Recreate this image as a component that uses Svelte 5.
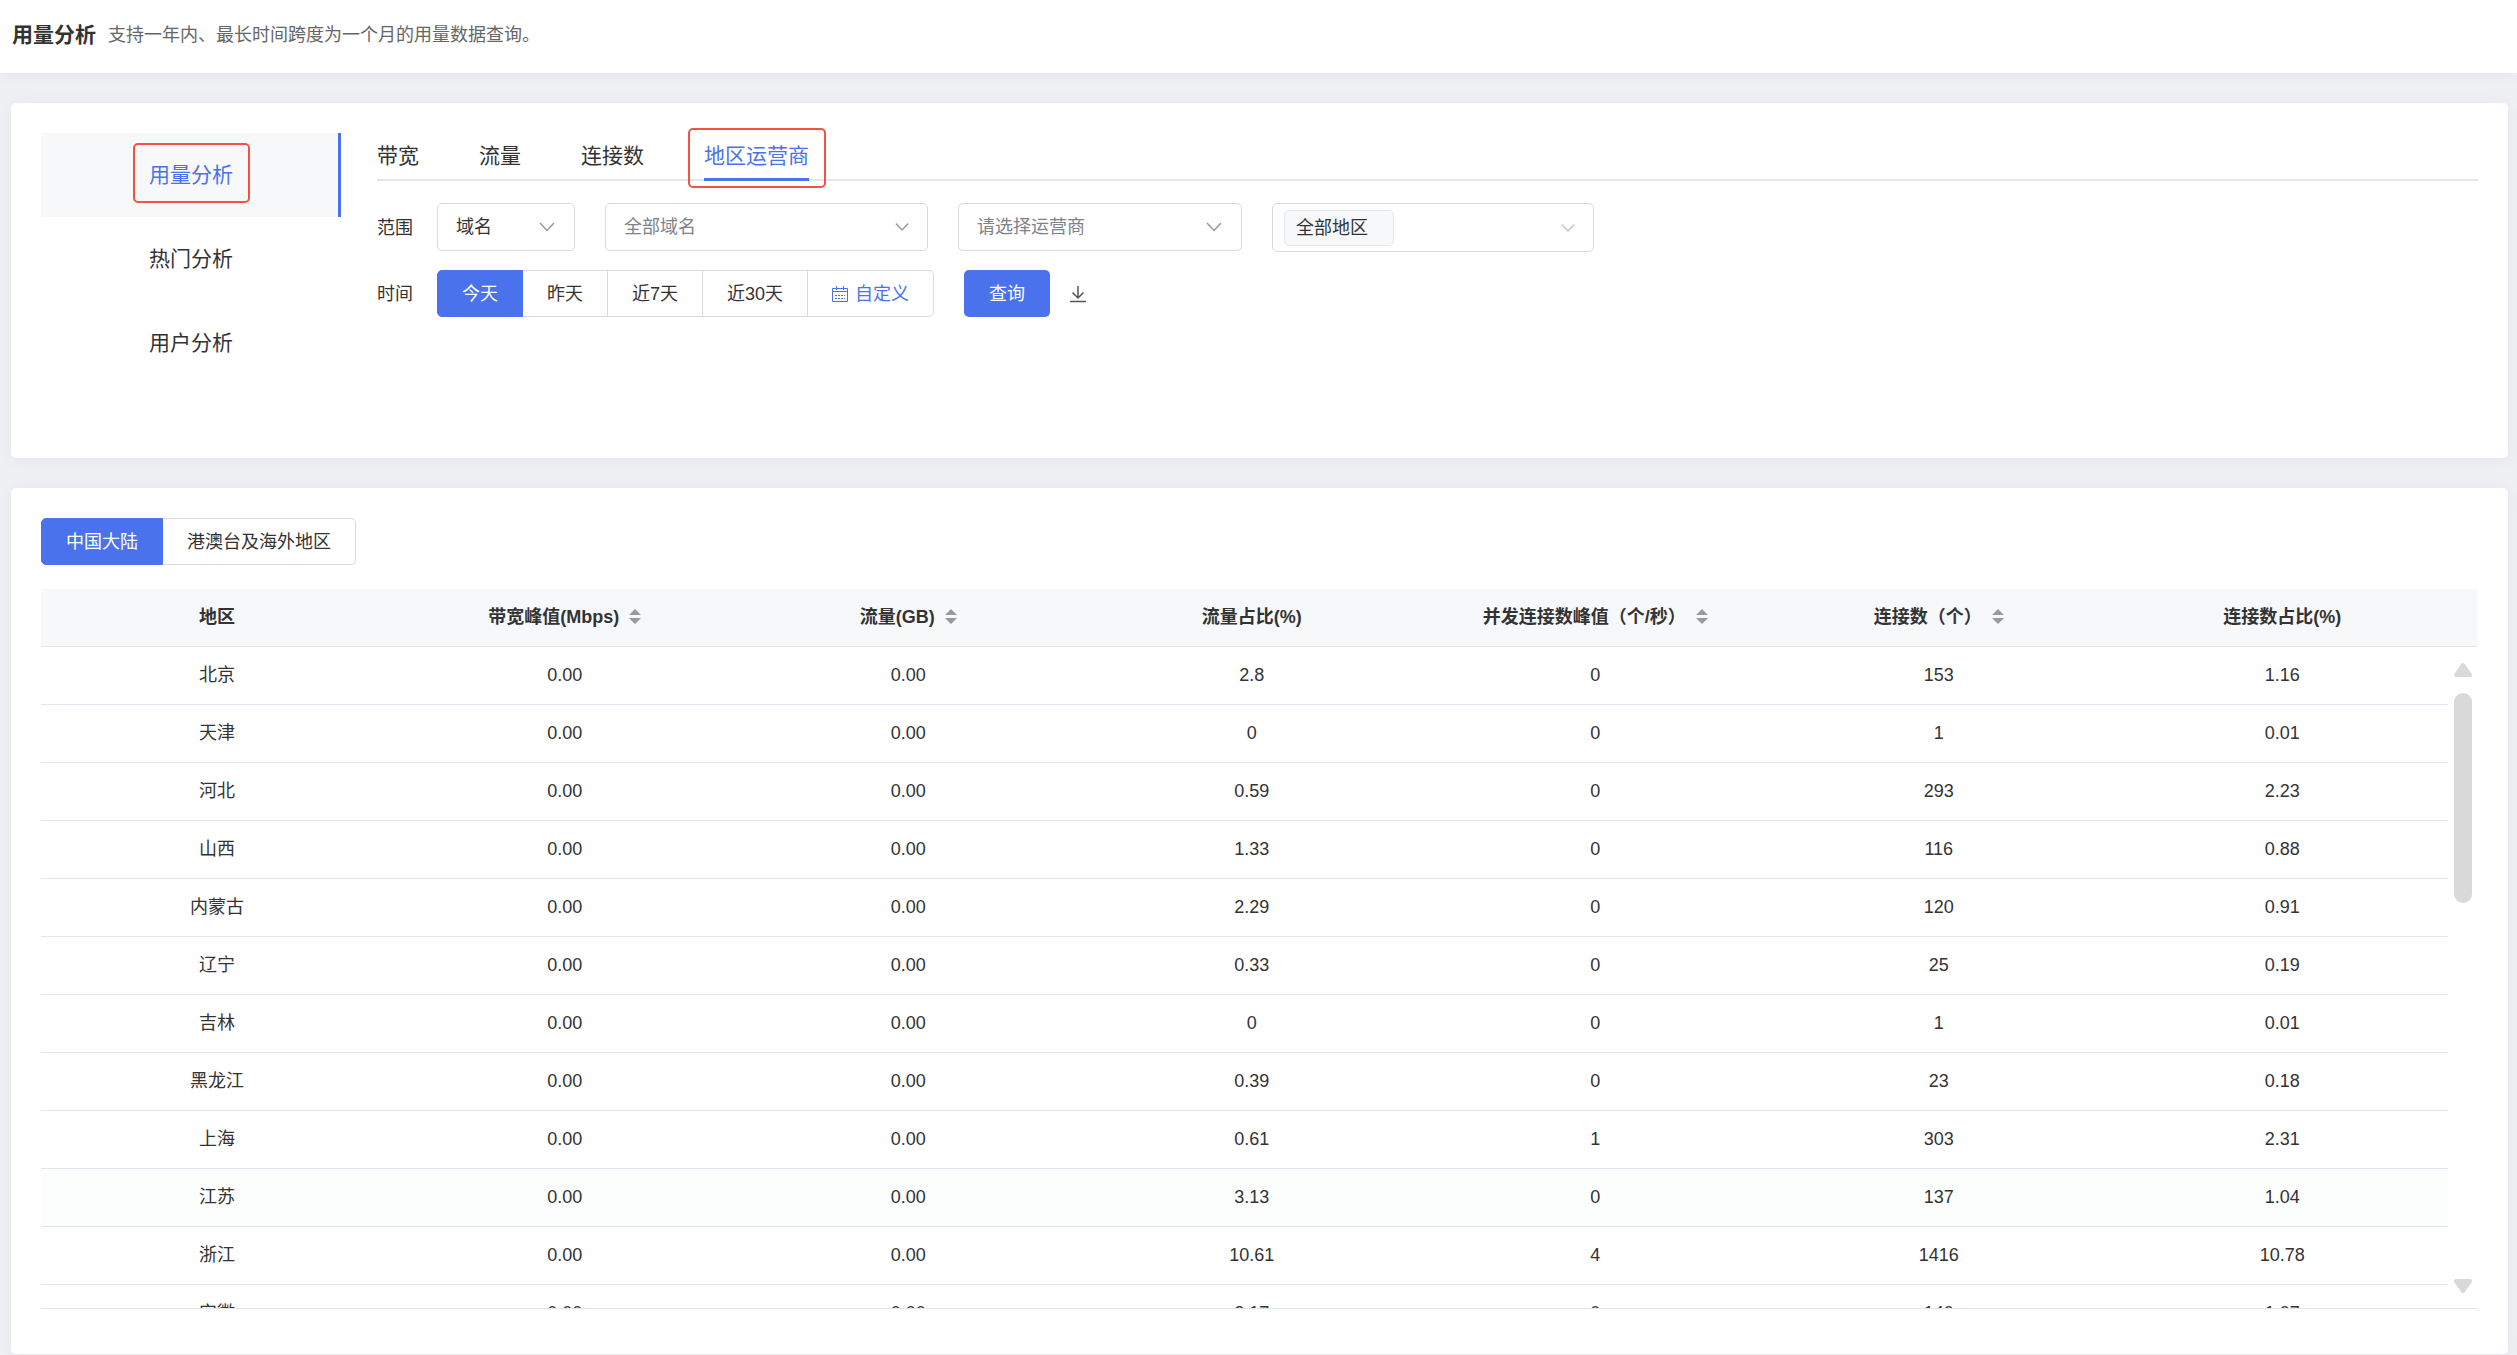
<script lang="ts">
  type Column = { key: string; label: string; sortable?: boolean };

  const menu = ['用量分析', '热门分析', '用户分析'];
  const tabs = ['带宽', '流量', '连接数', '地区运营商'];
  const ranges = ['今天', '昨天', '近7天', '近30天'];
  const areas = ['中国大陆', '港澳台及海外地区'];

  const columns: Column[] = [
    { key: 'area', label: '地区' },
    { key: 'bandwidth', label: '带宽峰值(Mbps)', sortable: true },
    { key: 'flow', label: '流量(GB)', sortable: true },
    { key: 'flowRate', label: '流量占比(%)' },
    { key: 'peak', label: '并发连接数峰值（个/秒）', sortable: true },
    { key: 'conn', label: '连接数（个）', sortable: true },
    { key: 'connRate', label: '连接数占比(%)' }
  ];

  const rows = [
    ['北京', '0.00', '0.00', '2.8', '0', '153', '1.16'],
    ['天津', '0.00', '0.00', '0', '0', '1', '0.01'],
    ['河北', '0.00', '0.00', '0.59', '0', '293', '2.23'],
    ['山西', '0.00', '0.00', '1.33', '0', '116', '0.88'],
    ['内蒙古', '0.00', '0.00', '2.29', '0', '120', '0.91'],
    ['辽宁', '0.00', '0.00', '0.33', '0', '25', '0.19'],
    ['吉林', '0.00', '0.00', '0', '0', '1', '0.01'],
    ['黑龙江', '0.00', '0.00', '0.39', '0', '23', '0.18'],
    ['上海', '0.00', '0.00', '0.61', '1', '303', '2.31'],
    ['江苏', '0.00', '0.00', '3.13', '0', '137', '1.04'],
    ['浙江', '0.00', '0.00', '10.61', '4', '1416', '10.78'],
    ['安徽', '0.00', '0.00', '2.17', '0', '140', '1.07']
  ];

  let activeMenu = $state('用量分析');
  let activeTab = $state('地区运营商');
  let activeRange = $state('今天');
  let activeArea = $state('中国大陆');
</script>

{#snippet chevron()}
  <svg class="chevron" viewBox="0 0 16 10" aria-hidden="true"><path d="M1 1l7 7.500 7-7.500" /></svg>
{/snippet}

<header class="top">
  <h1>用量分析</h1>
  <p>支持一年内、最长时间跨度为一个月的用量数据查询。</p>
</header>

<main>
  <section class="card filter">
    <nav class="menu">
      {#each menu as item}
        <button type="button" class:active={activeMenu === item} onclick={() => (activeMenu = item)}>
          <span class:marked={item === '用量分析'}>{item}</span>
        </button>
      {/each}
    </nav>

    <div class="content">
      <div class="tabs" role="tablist">
        {#each tabs as tab}
          <button type="button" role="tab" aria-selected={activeTab === tab} class:active={activeTab === tab}
                  class:marked={tab === '地区运营商'} onclick={() => (activeTab = tab)}>{tab}</button>
        {/each}
      </div>

      <div class="row">
        <label class="lbl" for="scope">范围</label>
        <div class="fields">
          <div class="select scope">
            <select id="scope"><option>域名</option></select>
            {@render chevron()}
          </div>
          <div class="select domain">
            <select class="hint" aria-label="域名"><option>全部域名</option></select>
            {@render chevron()}
          </div>
          <div class="select isp">
            <select class="hint" aria-label="运营商"><option>请选择运营商</option></select>
            {@render chevron()}
          </div>
          <button type="button" class="select region" aria-haspopup="listbox">
            <span class="tag">全部地区</span>
            {@render chevron()}
          </button>
        </div>
      </div>

      <div class="row">
        <span class="lbl">时间</span>
        <div class="fields">
          <div class="group">
            {#each ranges as range}
              <button type="button" class:active={activeRange === range} onclick={() => (activeRange = range)}>{range}</button>
            {/each}
            <button type="button" class="custom">
              <svg viewBox="0 0 16 16" aria-hidden="true">
                <path d="M.5 2.500h15v13H.5zM.5 5.500h15M4.500 0v4M11.500 0v4" />
                <path class="dots" d="M3 9.500h10M3 12.500h10" />
              </svg>
              自定义
            </button>
          </div>
          <div class="actions">
            <button type="button" class="primary">查询</button>
            <button type="button" class="download" aria-label="下载">
              <svg viewBox="0 0 16 18" aria-hidden="true"><path d="M8 1v12M2.500 7.500L8 13l5.500-5.500M0 16.500h16" /></svg>
            </button>
          </div>
        </div>
      </div>
    </div>
  </section>

  <section class="card result">
    <div class="group">
      {#each areas as area}
        <button type="button" class:active={activeArea === area} onclick={() => (activeArea = area)}>{area}</button>
      {/each}
    </div>

    <div class="grid">
      <div class="scroll">
        <table>
          <thead>
            <tr>
              {#each columns as col (col.key)}
                <th scope="col">
                  <span>{col.label}</span>
                  {#if col.sortable}
                    <button type="button" class="sort" aria-label="排序">
                      <svg viewBox="0 0 12 16" aria-hidden="true"><path d="M6 0l6 6H0zM0 9h12l-6 6z" /></svg>
                    </button>
                  {/if}
                </th>
              {/each}
              <th class="gutter"></th>
            </tr>
          </thead>
          <tbody>
            {#each rows as row}
              <tr class:hover={row[0] === '江苏'}>
                {#each row as cell}
                  <td>{cell}</td>
                {/each}
                <td class="gutter"></td>
              </tr>
            {/each}
          </tbody>
        </table>
      </div>
      <div class="rail" aria-hidden="true">
        <svg viewBox="0 0 18 14"><path d="M9 2l7 10H2z" /></svg>
        <div class="thumb"></div>
        <svg viewBox="0 0 18 14"><path d="M2 2h14L9 12z" /></svg>
      </div>
    </div>
  </section>
</main>

<style>
:global(body){background:#eef0f4;color:#333;font:18px/24px "Liberation Sans","Noto Sans CJK SC",sans-serif}
button,select{font:inherit;color:inherit;margin:0;padding:0;border:0;background:none;cursor:pointer}
svg{display:block;fill:none;stroke:currentColor}

.top{display:flex;align-items:center;gap:12px;height:73px;padding:0 12px 4px;box-sizing:border-box;background:#fff;box-shadow:0 2px 15px rgba(0,0,0,.05)}
.top h1{margin:0;font-size:21px;font-weight:700}
.top p{margin:0;color:#666}

main{padding:30px 9px 1px 11px}
.card{background:#fff;border-radius:5px;box-shadow:0 2px 15px rgba(0,0,0,.05);padding:30px}
.card + .card{margin-top:30px;padding-bottom:45px}

.filter{display:flex;gap:36px;min-height:295px}
.menu{width:300px;flex:none}
.menu button{display:flex;align-items:center;justify-content:center;width:100%;height:84px;padding-left:3px;font-size:21px;border:0 solid transparent;border-right-width:3px}
.menu button.active{background:#f7f8fa;border-color:#4a72ec;color:#4a72ec}
.marked{position:relative}
.marked::before{content:"";position:absolute;inset:-20px -17px -16px -16px;border:2px solid #f25244;border-radius:5px}

.content{flex:1;min-width:0}
.tabs{display:flex;gap:60px;height:48px;box-sizing:border-box;border-bottom:2px solid #e1e5ec}
.tabs button{font-size:21px;height:48px;border-bottom:3px solid transparent}
.tabs button.active{color:#4a72ec;border-color:#4a72ec}
.tabs .marked::before{inset:-5px -17px -10px -16px}

.row{display:flex;align-items:center;margin-top:18px}
.tabs + .row{margin-top:22px}
.lbl{width:60px;flex:none}
.fields{display:flex;align-items:flex-start;gap:30px}
.select{display:flex;align-items:center;position:relative;height:48px;box-sizing:border-box;border:1px solid #d9dade;border-radius:5px;background:#fff}
.select select{appearance:none;width:100%;height:100%;padding:0 18px;outline:0}
.select .hint{color:#808289}
.chevron{position:absolute;right:19px;top:50%;width:16px;height:10px;margin-top:-5px;color:#999;stroke-width:1.500;pointer-events:none}
.domain .chevron,.region .chevron{right:18px;width:14px}
.scope{width:138px}
.domain{width:323px}
.isp{width:284px}
.region{width:322px;height:49px;padding:0 11px}
.region .chevron{color:#c0c4cc}
.tag{width:110px;height:36px;line-height:34px;box-sizing:border-box;padding-left:11px;text-align:left;border:1px solid #e4e7ed;border-radius:5px;background:#f7f8fa}

.group{display:flex;width:max-content}
.group button{display:flex;align-items:center;height:47px;padding:0 24px;box-sizing:border-box;border:1px solid #d9dade;border-left-width:0;background:#fff}
.group button:first-child{border-left-width:1px;border-radius:5px 0 0 5px}
.group button:last-child{border-radius:0 5px 5px 0}
.group button.active{background:#4a72ec;border-color:#4a72ec;color:#fff}
.group .custom{gap:7px;color:#4a72ec}
.custom svg{width:16px;height:16px}
.custom .dots{stroke-dasharray:2 1}
.actions{display:flex;align-items:center;gap:20px}
.primary{height:47px;padding:0 25px;border-radius:5px;background:#4a72ec;color:#fff}
.download svg{width:16px;height:18px;color:#555;stroke-width:1.500}

.grid{position:relative;margin-top:24px;border-bottom:1px solid #e1e5ec}
.scroll{height:719px;overflow:hidden}
table{width:100%;table-layout:fixed;border-collapse:separate;border-spacing:0}
th,td{height:58px;box-sizing:border-box;padding:0 0 2px;text-align:center;border-bottom:1px solid #e1e5ec}
th{background:#f7f8fa;font-weight:700}
th:first-child{width:352px}
th.gutter{width:24px}
th span{vertical-align:middle}
tr.hover td{background:#fcfefe}
.sort{display:inline-block;vertical-align:middle;margin-left:5px}
.sort svg{width:12px;height:16px;fill:#999;stroke:none}

.rail{position:absolute;top:58px;right:0;bottom:0;width:30px;padding:16px 6px 15px;box-sizing:border-box;background:#fff;display:flex;flex-direction:column}
.rail svg{width:18px;height:14px;flex:none;fill:#d9d9d9;stroke:#d9d9d9;stroke-width:4;stroke-linejoin:round}
.rail .thumb{height:210px;margin:16px 0 auto;border-radius:9px;background:#d9d9d9}
</style>
